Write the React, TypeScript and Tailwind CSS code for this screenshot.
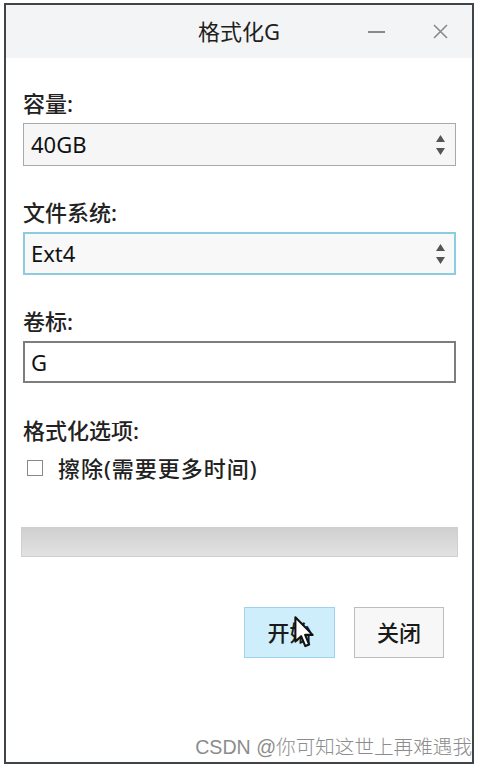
const font = { fontFamily: '"Noto Sans", "Noto Sans CJK SC", sans-serif' }

function Spinner() {
    return (
        <div className="flex flex-col items-center gap-[6px] pr-[2px]">
            <svg width="9" height="7" viewBox="0 0 9 7">
                <path d="M4.5 0 L9 7 L0 7 Z" fill="#555" />
            </svg>
            <svg width="9" height="7" viewBox="0 0 9 7">
                <path d="M0 0 L9 0 L4.5 7 Z" fill="#555" />
            </svg>
        </div>
    )
}

function Field({ label, children }: { label: string; children: React.ReactNode }) {
    return (
        <div>
            <div className="text-[22px] leading-[30px] font-medium text-[#222]">{label}</div>
            <div className="mt-[5px]">{children}</div>
        </div>
    )
}

function Cursor() {
    return (
        <svg className="absolute left-[49px] top-[8px]" width="21" height="32" viewBox="0 0 13 20">
            <path
                d="M0.8 0.8 L0.8 16 L4.4 12.6 L7 18.8 L9.4 17.8 L6.9 11.8 L11.6 11.8 Z"
                fill="#fff"
                stroke="#111"
                strokeWidth="1.3"
                strokeLinejoin="round"
            />
        </svg>
    )
}

export default function App() {
    return (
        <div className="w-[482px] h-[769px] bg-white pt-[3px] pl-[4px]" style={font}>
            <div className="relative w-[470px] h-[761px] border-2 border-[#3f4448] bg-white flex flex-col">
                <div className="relative h-[53px] bg-[#f3f4f5] flex items-center justify-center">
                    <span className="text-[22px] text-[#1e1e1e]">格式化G</span>
                    <div className="absolute right-[24px] top-0 h-full flex items-center gap-[48px]">
                        <div className="w-[17px] h-[2px] bg-[#8a8a8a]" />
                        <svg width="15" height="15" viewBox="0 0 15 15">
                            <path d="M1 1 L14 14 M14 1 L1 14" stroke="#8a8a8a" strokeWidth="1.6" />
                        </svg>
                    </div>
                </div>

                <div className="flex flex-col pl-[17px] pr-[16px]">
                    <div className="mt-[30px]">
                        <Field label="容量:">
                            <div className="h-[43px] border border-[#a9a9a9] bg-[#f6f6f6] flex items-center justify-between pl-[7px] pr-[8px] text-[22px] text-[#111]">
                                <span>40GB</span>
                                <Spinner />
                            </div>
                        </Field>
                    </div>
                    <div className="mt-[31px]">
                        <Field label="文件系统:">
                            <div className="h-[43px] border-2 border-[#8ccbe0] bg-[#f8f8f8] flex items-center justify-between pl-[6px] pr-[7px] text-[22px] text-[#111]">
                                <span>Ext4</span>
                                <Spinner />
                            </div>
                        </Field>
                    </div>
                    <div className="mt-[31px]">
                        <Field label="卷标:">
                            <div className="h-[42px] border-2 border-[#7d7d7d] bg-white flex items-center pl-[6px] text-[22px] text-[#111]">
                                G
                            </div>
                        </Field>
                    </div>
                    <div className="mt-[32px] text-[22px] leading-[30px] font-medium text-[#222]">格式化选项:</div>
                    <div className="mt-[8px] flex items-center h-[30px] text-[22px] font-medium text-[#222]">
                        <div className="ml-[4px] w-[16px] h-[16px] border border-[#888] bg-white" />
                        <span className="ml-[15px] tracking-[1px]">擦除(需要更多时间)</span>
                    </div>
                    <div className="mt-[44px] -ml-[2px] -mr-[2px] h-[30px] border border-[#cfcfcf] bg-gradient-to-b from-[#d0d0d0] to-[#e2e2e2]" />
                    <div className="mt-[50px] flex justify-end gap-[19px] pr-[12px] font-medium">
                        <div className="relative w-[91px] h-[51px] border border-[#9fd3ea] bg-[#cdeefa] flex items-center justify-center text-[22px] text-[#1a1a1a]">
                            开始
                            <Cursor />
                        </div>
                        <div className="w-[90px] h-[51px] border border-[#bdbdbd] bg-[#f7f7f7] flex items-center justify-center text-[22px] text-[#1a1a1a]">
                            关闭
                        </div>
                    </div>
                </div>

                <div
                    className="absolute right-[0px] bottom-[3px] text-[19.6px] leading-[24px] font-light text-[#8c8c8c] bg-white/60"
                    style={{ fontFamily: '"Liberation Sans", "Noto Sans CJK SC", sans-serif' }}
                >
                    CSDN @你可知这世上再难遇我
                </div>
            </div>
        </div>
    )
}
